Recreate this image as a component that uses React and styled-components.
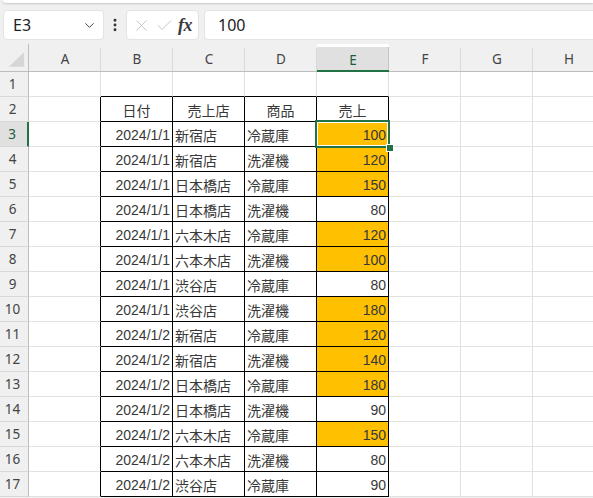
import React from 'react'
import styled, { createGlobalStyle } from 'styled-components'
import { ChevronDown, EllipsisVertical, X, Check } from 'lucide-react'

const GlobalStyle = createGlobalStyle`
    html, body {
        margin: 0;
        padding: 0;
        background: #f0f0f0;
        overflow: hidden;
    }
    body {
        font-family: "Noto Sans", "Liberation Sans", sans-serif;
    }
`

const columns = ['A', 'B', 'C', 'D', 'E', 'F', 'G', 'H']

const rows = [
    ['2024/1/1', '新宿店', '冷蔵庫', 100],
    ['2024/1/1', '新宿店', '洗濯機', 120],
    ['2024/1/1', '日本橋店', '冷蔵庫', 150],
    ['2024/1/1', '日本橋店', '洗濯機', 80],
    ['2024/1/1', '六本木店', '冷蔵庫', 120],
    ['2024/1/1', '六本木店', '洗濯機', 100],
    ['2024/1/1', '渋谷店', '冷蔵庫', 80],
    ['2024/1/1', '渋谷店', '洗濯機', 180],
    ['2024/1/2', '新宿店', '冷蔵庫', 120],
    ['2024/1/2', '新宿店', '洗濯機', 140],
    ['2024/1/2', '日本橋店', '冷蔵庫', 180],
    ['2024/1/2', '日本橋店', '洗濯機', 90],
    ['2024/1/2', '六本木店', '冷蔵庫', 150],
    ['2024/1/2', '六本木店', '洗濯機', 80],
    ['2024/1/2', '渋谷店', '冷蔵庫', 90],
]

const GRID = '#e1e1e1'
const BLACK = '#000'
const GREEN = '#217346'

// active cell E3
const ACTIVE_ROW = 3
const ACTIVE_COL = 4

function App() {
    // sheet rows 1..17 -> array of 8 cells each
    const sheet = []
    for (let r = 1; r <= 17; r++) {
        const cells = columns.map(() => null)
        if (r === 2) {
            cells[1] = { text: '日付', align: 'center' }
            cells[2] = { text: '売上店', align: 'center' }
            cells[3] = { text: '商品', align: 'center' }
            cells[4] = { text: '売上', align: 'center' }
        } else if (r >= 3) {
            const [date, shop, item, sales] = rows[r - 3]
            cells[1] = { text: date, align: 'right' }
            cells[2] = { text: shop, align: 'left' }
            cells[3] = { text: item, align: 'left' }
            cells[4] = { text: String(sales), align: 'right', fill: sales >= 100 }
        }
        sheet.push(cells)
    }

    const inTable = (r, c) => r >= 2 && c >= 1 && c <= 4

    return <Window>
        <GlobalStyle />
        <TopStrip />
        <Toolbar>
            <NameBox>
                <span>E3</span>
                <ChevronDown size={15} strokeWidth={1.6} color="#444" />
            </NameBox>
            <Dots>
                <EllipsisVertical size={16} strokeWidth={2.4} color="#333" />
            </Dots>
            <FormulaButtons>
                <X size={19} strokeWidth={1.1} color="#bdbdbd" />
                <Check size={19} strokeWidth={1.1} color="#bdbdbd" />
                <Fx>fx</Fx>
            </FormulaButtons>
            <FormulaInput>100</FormulaInput>
        </Toolbar>
        <Sheet>
            <Corner>
                <svg width="29" height="28" viewBox="0 0 29 28">
                    <polygon points="25,8 25,23 9,23" fill="#d6d6d6" />
                </svg>
            </Corner>
            {columns.map((col, c) =>
                <ColHeader key={col} $active={c === ACTIVE_COL}>{col}</ColHeader>
            )}
            {sheet.map((cells, i) => {
                const r = i + 1
                return <React.Fragment key={r}>
                    <RowHeader $active={r === ACTIVE_ROW}>{r}</RowHeader>
                    {cells.map((cell, c) => {
                        const right = inTable(r, c) || inTable(r, c + 1) ? BLACK : GRID
                        const bottom = inTable(r, c) || inTable(r + 1, c) ? BLACK : GRID
                        return <Cell
                            key={c}
                            $right={right}
                            $bottom={bottom}
                            $align={cell ? cell.align : 'left'}
                            $fill={cell && cell.fill}
                        >
                            {cell ? cell.text : ''}
                        </Cell>
                    })}
                </React.Fragment>
            })}
            <Selection $row={ACTIVE_ROW + 1} $col={ACTIVE_COL + 2}>
                <FillHandle />
            </Selection>
        </Sheet>
    </Window>
}

const Window = styled.div`
    width: 593px;
    height: 498px;
    overflow: hidden;
    background: #f0f0f0;
`

const TopStrip = styled.div`
    height: 3px;
    margin-left: 3px;
    background: #fff;
    border-bottom-left-radius: 4px;
    box-shadow: 0 1px 2px rgba(0, 0, 0, 0.18);
`

const Toolbar = styled.div`
    height: 41px;
    display: flex;
    align-items: flex-start;
    padding: 7px 0 0 3px;
    box-sizing: border-box;
`

const Box = styled.div`
    height: 30px;
    box-sizing: border-box;
    background: #fff;
    border: 1px solid #e3e3e3;
    border-radius: 4px;
    display: flex;
    align-items: center;
`

const NameBox = styled(Box)`
    width: 101px;
    padding: 0 6px 0 9px;
    justify-content: space-between;
    font-size: 16px;
    color: #222;
`

const Dots = styled.div`
    width: 22px;
    height: 30px;
    display: flex;
    align-items: center;
    justify-content: center;
`

const FormulaButtons = styled(Box)`
    width: 73px;
    padding: 0 4px 0 5px;
    justify-content: space-between;
`

const Fx = styled.span`
    font-family: "Liberation Serif", "DejaVu Serif", serif;
    font-style: italic;
    font-weight: bold;
    font-size: 18px;
    color: #3a3a3a;
    padding-right: 2px;
    letter-spacing: -0.5px;
`

const FormulaInput = styled(Box)`
    flex: 1;
    margin-left: 5px;
    border-right: none;
    border-top-right-radius: 0;
    border-bottom-right-radius: 0;
    padding-left: 13px;
    font-size: 16px;
    color: #222;
`

const Sheet = styled.div`
    position: relative;
    display: grid;
    grid-template-columns: 29px repeat(8, 72px);
    grid-template-rows: 28px repeat(17, 25px);
    width: 605px;
    background: #fff;
`

const Corner = styled.div`
    background: #f0f0f0;
    border-right: 1px solid #bdbdbd;
    border-bottom: 1px solid #bdbdbd;
    box-sizing: border-box;
    display: flex;
    svg { display: block; }
`

const ColHeader = styled.div`
    position: relative;
    box-sizing: border-box;
    display: flex;
    align-items: center;
    justify-content: center;
    padding-top: 3px;
    font-size: 13.5px;
    color: ${p => p.$active ? '#1e5e3a' : '#444'};
    background: ${p => p.$active ? '#e0e0e0' : '#f0f0f0'};
    border-bottom: ${p => p.$active ? `2px solid ${GREEN}` : '1px solid #bdbdbd'};
    margin-top: ${p => p.$active ? '3px' : '0'};

    &::after {
        content: '';
        position: absolute;
        right: 0;
        top: ${p => p.$active ? '0' : '4px'};
        bottom: 0;
        width: 1px;
        background: ${p => p.$active ? '#c6c6c6' : '#d8d8d8'};
    }
`

const RowHeader = styled.div`
    box-sizing: border-box;
    display: flex;
    align-items: center;
    justify-content: center;
    padding-right: 3px;
    font-size: 13.5px;
    color: ${p => p.$active ? '#1e5e3a' : '#444'};
    background: ${p => p.$active ? '#e0e0e0' : '#f0f0f0'};
    border-bottom: 1px solid #d8d8d8;
    border-right: ${p => p.$active ? `2px solid ${GREEN}` : '1px solid #bdbdbd'};
`

const Cell = styled.div`
    box-sizing: border-box;
    display: flex;
    align-items: center;
    justify-content: ${p => p.$align === 'right' ? 'flex-end' : p.$align === 'center' ? 'center' : 'flex-start'};
    padding: 1px 2px 0 2px;
    font-family: "Liberation Sans", "Noto Sans CJK JP", sans-serif;
    font-size: 14px;
    color: #383838;
    white-space: nowrap;
    background: ${p => p.$fill ? '#ffc000' : '#fff'};
    border-right: 1px solid ${p => p.$right};
    border-bottom: 1px solid ${p => p.$bottom};
`

// absolutely placed over the active cell's grid area
const Selection = styled.div`
    position: absolute;
    grid-row: ${p => p.$row} / ${p => p.$row + 1};
    grid-column: ${p => p.$col} / ${p => p.$col + 1};
    z-index: 3;
    top: -2px;
    left: -2px;
    right: -1px;
    bottom: -1px;
    border: 2px solid ${GREEN};
    box-shadow: inset 0 0 0 1px #fff;
    pointer-events: none;
`

const FillHandle = styled.div`
    position: absolute;
    right: -6px;
    bottom: -6px;
    width: 6px;
    height: 6px;
    background: ${GREEN};
    border: 1px solid #fff;
`

export default App
